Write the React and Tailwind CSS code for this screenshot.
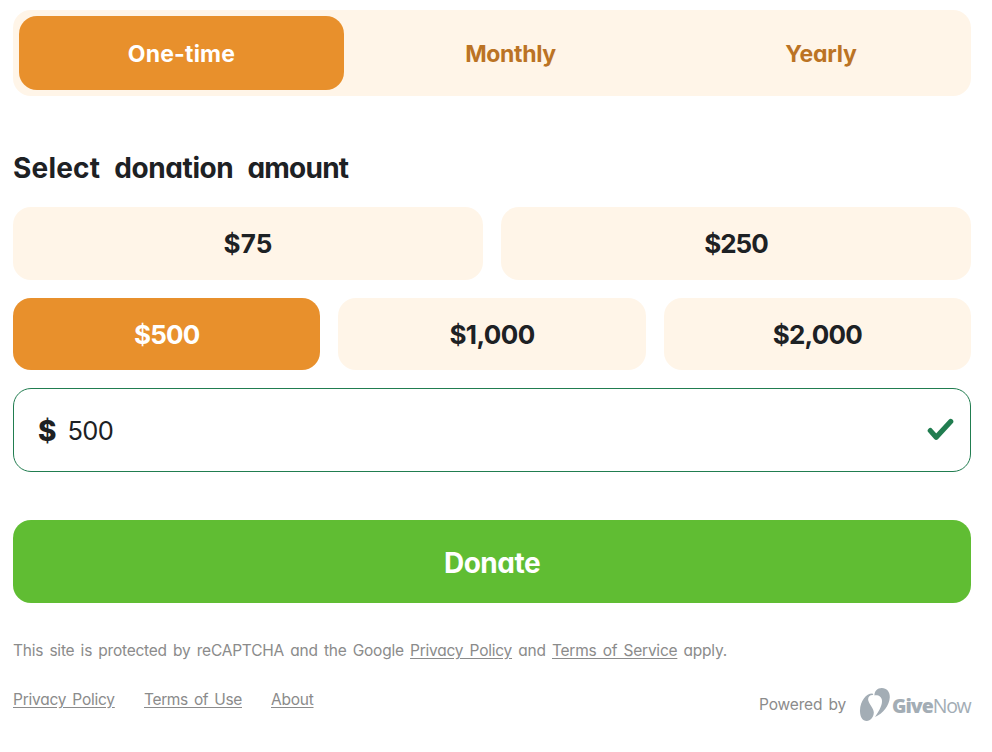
import React, { useState } from 'react';
import clsx from 'clsx';

const frequencies = [
    { label: 'One-time', width: 'w-[325px]', text: 'tracking-[0.2px]' },
    { label: 'Monthly', width: 'w-[333px]', text: 'tracking-[-0.35px]' },
    { label: 'Yearly', width: 'w-[288px]', text: 'tracking-[-0.2px]' },
];

const amounts = [
    { label: '$75', value: 75, span: 'col-span-3', text: 'tracking-[0.2px]' },
    { label: '$250', value: 250, span: 'col-span-3', text: 'tracking-[-1px]' },
    { label: '$500', value: 500, span: 'col-span-2', text: 'tracking-[-0.8px]' },
    { label: '$1,000', value: 1000, span: 'col-span-2', text: 'tracking-[-0.6px]' },
    { label: '$2,000', value: 2000, span: 'col-span-2', text: 'tracking-[-0.8px]' },
];

const CheckMark = () => (
    <svg width="27" height="24" viewBox="0 0 27 24" fill="none" className="shrink-0">
        <path
            d="M3.300 12.600L9.200 19.300L23.700 3.500"
            stroke="#217d50"
            strokeWidth="5.2"
            strokeLinecap="round"
            strokeLinejoin="round"
        />
    </svg>
);

const GiveNowLogo = () => (
    <div className="flex items-center text-[#a3adb5]">
        <svg width="30" height="34" viewBox="0 0 30 34" fill="currentColor" className="shrink-0">
            <path d="M12.500 5.500C6.500 5.200 .2 12.700 0 22.500C-.1 28.800 2.400 33 6.700 33C10.500 33 13.500 29.300 13.800 24.800C14 20.500 9.300 16.500 8.300 12.500C7.500 9.300 9.600 6.600 13.300 7Z" />
            <path d="M14.500 7.500C14.200 3.500 17.300 0 21.800 0C26.700 0 30 3.900 29.800 9.200C29.500 17.500 22.800 25.500 15 29C18 24 22.200 18.200 22 12.900C21.900 8.900 18.300 6.800 14.500 7.500Z" />
        </svg>
        <span className="ml-[2px] mt-px font-['Open_Sans'] text-[19.500px] leading-none">
            <span className="font-extrabold tracking-[-1px]">Give</span>
            <span className="font-normal tracking-[-1.300px]">Now</span>
        </span>
    </div>
);

const App = () => {
    const [frequency, setFrequency] = useState('One-time');
    const [amount, setAmount] = useState(500);

    return (
        <div className="h-[752px] overflow-hidden bg-white pl-[13px] pr-[21px] pt-[10px] font-['Inter',sans-serif] text-[#1d2124] [font-feature-settings:'cv11']">
            {/* Frequency tabs */}
            <div className="flex h-[86px] rounded-[18px] bg-[#fff5e8] p-[6px]">
                {frequencies.map((item) => (
                    <button
                        key={item.label}
                        onClick={() => setFrequency(item.label)}
                        className={clsx(
                            'rounded-[18px] pt-[2px] text-[23px] font-bold',
                            item.width,
                            item.text,
                            frequency === item.label ? 'bg-[#e8902c] text-white' : 'text-[#bb7324]'
                        )}
                    >
                        {item.label}
                    </button>
                ))}
            </div>

            <h2 className="mt-[54px] flex h-9 gap-[14px] whitespace-nowrap text-[28px] font-bold leading-9">
                <span className="tracking-[0.2px]">Select</span>
                <span className="tracking-[-0.4px]">donation</span>
                <span className="tracking-[-0.75px]">amount</span>
            </h2>

            {/* Preset amounts */}
            <div className="mt-[21px] grid grid-cols-6 gap-[18px]">
                {amounts.map((item) => (
                    <button
                        key={item.value}
                        onClick={() => setAmount(item.value)}
                        className={clsx(
                            'rounded-[18px] text-[26px] font-bold',
                            item.span,
                            item.text,
                            item.value < 500 ? 'h-[73px]' : 'h-[72px]',
                            amount === item.value ? 'bg-[#e8902c] text-white' : 'bg-[#fff5e8]'
                        )}
                    >
                        {item.label}
                    </button>
                ))}
            </div>

            {/* Custom amount */}
            <div className="mt-[18px] flex h-[84px] items-center rounded-[18px] border border-[#217d50] pl-6 pr-4">
                <span className="pt-px text-[28px] font-extrabold">$</span>
                <input
                    value={amount}
                    onChange={(e) => setAmount(e.target.value)}
                    className="ml-[11px] min-w-0 flex-1 pt-[3px] text-[25.500px] tracking-[-0.7px] outline-none"
                />
                <CheckMark />
            </div>

            <button className="mt-12 h-[83px] w-full rounded-[18px] bg-[#60bd33] pt-[2px] text-[28px] font-bold tracking-[-0.5px] text-white">
                Donate
            </button>

            <p className="mt-9 h-6 whitespace-nowrap text-[15.500px] leading-6 tracking-[-0.23px] text-[#8b8b8b] [word-spacing:2.1px]">
                This site is protected by reCAPTCHA and the Google{' '}
                <a className="underline underline-offset-2">Privacy Policy</a> and{' '}
                <a className="underline underline-offset-2">Terms of Service</a> apply.
            </p>

            <div className="mt-[25px] flex justify-between text-[15.500px] leading-6 tracking-[-0.24px] text-[#8b8b8b] [word-spacing:2px]">
                <div className="flex">
                    <a className="w-[131px] underline underline-offset-2">Privacy Policy</a>
                    <a className="w-[127px] tracking-[-0.35px] underline underline-offset-2">Terms of Use</a>
                    <a className="underline underline-offset-2">About</a>
                </div>
                <div className="flex items-center">
                    <span className="w-[101px] tracking-[-0.15px]">Powered by</span>
                    <div className="w-[111px]">
                        <GiveNowLogo />
                    </div>
                </div>
            </div>
        </div>
    );
};

export default App;
